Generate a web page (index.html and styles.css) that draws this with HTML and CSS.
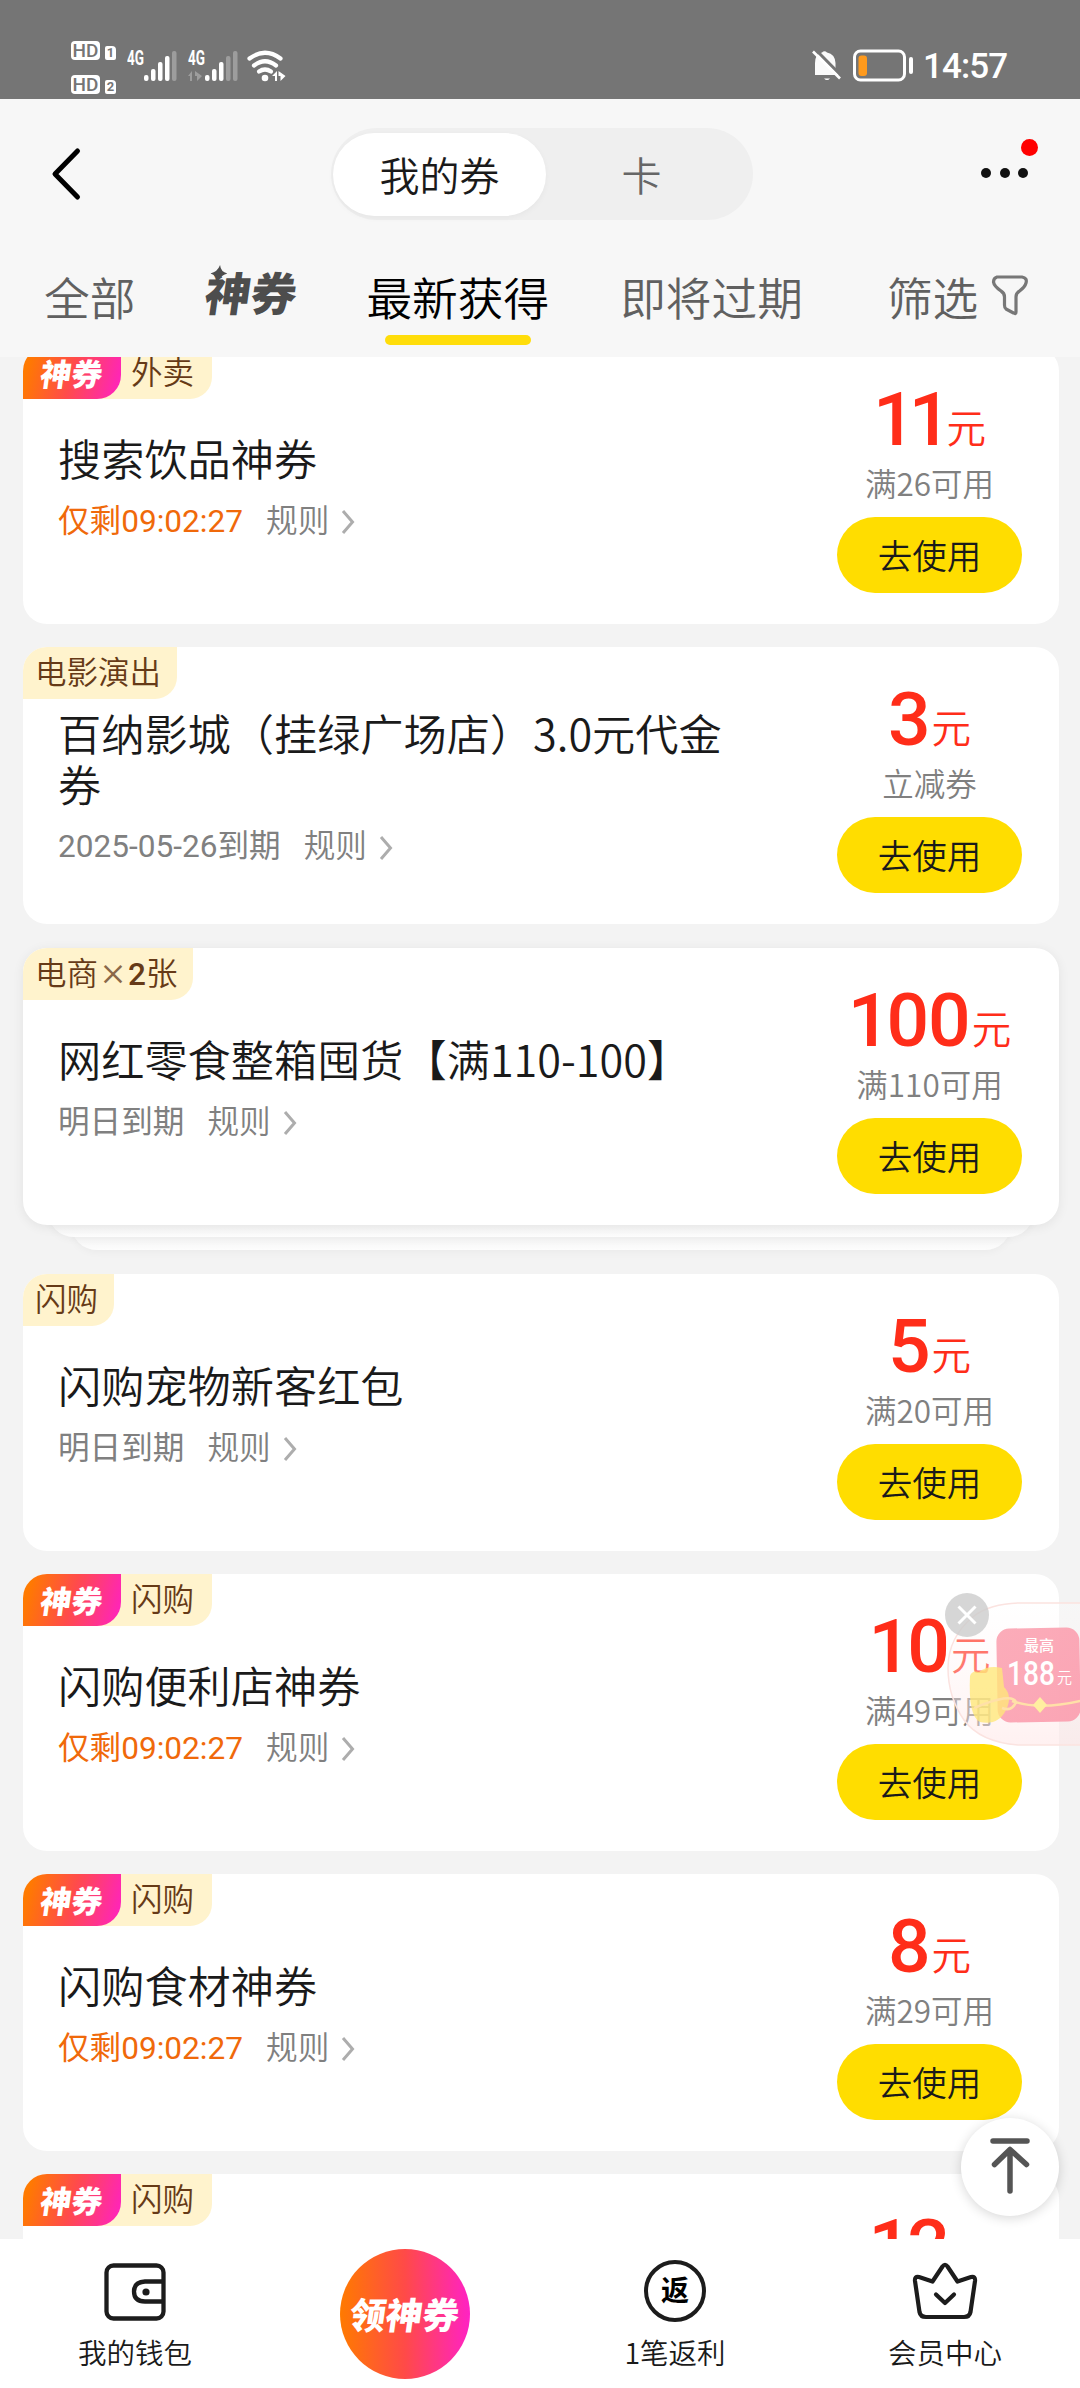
FILE: index.html
```html
<!DOCTYPE html>
<html lang="zh-CN">
<head>
<meta charset="utf-8">
<title>我的券</title>
<link rel="stylesheet" href="styles.css">
</head>
<body>
<svg class="defs" width="0" height="0" aria-hidden="true">
  <symbol id="chevron" viewBox="0 0 14 26"><path d="M2 2 L11.5 13 L2 24" fill="none" stroke="#adadad" stroke-width="3"/></symbol>
  <symbol id="spark" viewBox="0 0 16 16"><path d="M8 0 Q9.5 6.5 16 8 Q9.5 9.5 8 16 Q6.5 9.5 0 8 Q6.5 6.5 8 0Z" fill="currentColor"/></symbol>
</svg>
<div class="screen">
  <div class="status">
    <div class="hd">
      <div class="hd-row"><span class="hd-box">HD</span><span class="sim">1</span></div>
      <div class="hd-row"><span class="hd-box">HD</span><span class="sim">2</span></div>
    </div>
    <svg class="signals" width="160" height="34" viewBox="0 0 160 34">
      <g fill="#fff">
        <rect x="17" y="26" width="4.5" height="6" rx="2"/><rect x="24" y="20" width="4.5" height="12" rx="2"/><rect x="31" y="13" width="4.5" height="19" rx="2"/><rect x="38" y="7" width="4.5" height="25" rx="2"/>
        <rect x="78" y="26" width="4.5" height="6" rx="2"/><rect x="85" y="20" width="4.5" height="12" rx="2"/><rect x="92" y="13" width="4.5" height="19" rx="2"/>
      </g>
      <g fill="#9d9d9d">
        <rect x="45" y="2" width="4.5" height="30" rx="2"/><rect x="99" y="7" width="4.5" height="25" rx="2"/><rect x="106" y="2" width="4.5" height="30" rx="2"/>
        <path d="M61 27l4-5v10h-2v-5zM68 22l7 5-5 5v-5h-2z"/>
      </g>
      <text x="0" y="15.5" class="net" textLength="17" lengthAdjust="spacingAndGlyphs">4G</text>
      <text x="61" y="15.5" class="net" textLength="17" lengthAdjust="spacingAndGlyphs">4G</text>
      <g fill="none" stroke="#fff" stroke-width="4.2" stroke-linecap="round">
        <path d="M122.500 9.500Q138-2 153.500 9.500"/><path d="M127 16.500Q138 8 149 16.500"/><path d="M132 22.500Q138 18.500 144 22.500"/>
      </g>
      <circle cx="138" cy="29" r="3.300" fill="#fff"/>
      <path d="M145 27l5-5v10h-2v-5zM151.500 22l7 5-5 5v-5h-2z" fill="#fff"/>
    </svg>
    <div class="status-right">
      <svg width="30" height="32" viewBox="0 0 30 32"><path d="M5 25V13Q5 4 12 2.500Q14.500 0 17 2.500Q25 4 25.500 13V20L29 25Z" fill="#fafafa" transform="translate(-2 1)"/><path d="M12 29.500h6q-3 3-6 0z" fill="#fff"/><path d="M2.500-.500 30 27.500" stroke="#757575" stroke-width="3"/><path d="M1 2.500 28 29.500" stroke="#fff" stroke-width="2.600"/></svg>
      <svg class="battery" width="61" height="34" viewBox="0 0 61 34"><rect x="1.500" y="2" width="50" height="29" rx="6" fill="none" stroke="#fff" stroke-width="3"/><rect x="5.500" y="6.500" width="8.500" height="20.500" rx="3" fill="#ff9a1c"/><rect x="56" y="8" width="4" height="17" rx="2" fill="#fff"/></svg>
      <span class="time">14:57</span>
    </div>
  </div>

  <header class="header">
    <svg class="back" width="34" height="58" viewBox="0 0 34 58"><path d="M28.500 6 6 29 28.500 52" fill="none" stroke="#000" stroke-width="5" stroke-linecap="round" stroke-linejoin="round"/></svg>
    <div class="segment"><span class="seg seg-on">我的券</span><span class="seg">卡</span></div>
    <div class="more"><i></i><i></i><i></i><b></b></div>
  </header>

  <nav class="tabs">
    <span class="tab all">全部</span>
    <span class="tab brand">神券<svg class="brand-spark" width="17" height="17"><use href="#spark"/></svg></span>
    <span class="tab on">最新获得</span>
    <span class="tab soon">即将过期</span>
    <span class="tab filter">筛选<svg width="38" height="42" viewBox="0 0 38 42"><path d="M6 3H31Q36.500 4 35 9Q34 13 28 17.500Q25 19 25 23V38Q25 40.500 22.500 39L15 35Q13.500 34 13.500 31V23Q13.500 19 10 17Q3 12 2.500 8Q2.500 4 6 3Z" fill="none" stroke="#777" stroke-width="3.200" stroke-linejoin="round"/></svg></span>
  </nav>

  <main class="viewport">
    <div class="list">
      <article class="card">
        <div class="tags"><span class="tag-hot"><em>神券</em></span><span class="tag tag-after">外卖</span></div>
        <div class="info"><h2>搜索饮品神券</h2><p class="meta"><span class="left">仅剩09:02:27</span><span class="rule">规则</span><svg width="14" height="26"><use href="#chevron"/></svg></p></div>
        <div class="deal"><div class="price"><b class="ones">11</b><span>元</span></div><p class="cond">满26可用</p><a class="use">去使用</a></div>
      </article>
      <article class="card">
        <div class="tags"><span class="tag">电影演出</span></div>
        <div class="info"><h2>百纳影城（挂绿广场店）3.0元代金券</h2><p class="meta"><span>2025-05-26到期</span><span class="rule">规则</span><svg width="14" height="26"><use href="#chevron"/></svg></p></div>
        <div class="deal"><div class="price"><b>3</b><span>元</span></div><p class="cond">立减券</p><a class="use">去使用</a></div>
      </article>
      <div class="stack">
        <article class="card raised">
          <div class="tags"><span class="tag">电商<i class="times">×</i><b>2</b>张</span></div>
          <div class="info"><h2>网红零食整箱囤货【满110-100】</h2><p class="meta"><span>明日到期</span><span class="rule">规则</span><svg width="14" height="26"><use href="#chevron"/></svg></p></div>
          <div class="deal"><div class="price"><b><i class="one">1</i>00</b><span>元</span></div><p class="cond">满110可用</p><a class="use">去使用</a></div>
        </article>
        <div class="sheet sheet-1"></div>
        <div class="sheet sheet-2"></div>
      </div>
      <article class="card">
        <div class="tags"><span class="tag">闪购</span></div>
        <div class="info"><h2>闪购宠物新客红包</h2><p class="meta"><span>明日到期</span><span class="rule">规则</span><svg width="14" height="26"><use href="#chevron"/></svg></p></div>
        <div class="deal"><div class="price"><b>5</b><span>元</span></div><p class="cond">满20可用</p><a class="use">去使用</a></div>
      </article>
      <article class="card">
        <div class="tags"><span class="tag-hot"><em>神券</em></span><span class="tag tag-after">闪购</span></div>
        <div class="info"><h2>闪购便利店神券</h2><p class="meta"><span class="left">仅剩09:02:27</span><span class="rule">规则</span><svg width="14" height="26"><use href="#chevron"/></svg></p></div>
        <div class="deal"><div class="price"><b><i class="one">1</i>0</b><span>元</span></div><p class="cond">满49可用</p><a class="use">去使用</a></div>
      </article>
      <article class="card">
        <div class="tags"><span class="tag-hot"><em>神券</em></span><span class="tag tag-after">闪购</span></div>
        <div class="info"><h2>闪购食材神券</h2><p class="meta"><span class="left">仅剩09:02:27</span><span class="rule">规则</span><svg width="14" height="26"><use href="#chevron"/></svg></p></div>
        <div class="deal"><div class="price"><b>8</b><span>元</span></div><p class="cond">满29可用</p><a class="use">去使用</a></div>
      </article>
      <article class="card">
        <div class="tags"><span class="tag-hot"><em>神券</em></span><span class="tag tag-after">闪购</span></div>
        <div class="info"></div>
        <div class="deal"><div class="price"><b><i class="one">1</i>2</b><span>元</span></div></div>
      </article>
    </div>
  </main>

  <footer class="dock">
    <div class="dock-item">
      <svg width="64" height="62" viewBox="0 0 64 62"><g fill="none" stroke="#1c1c1c" stroke-width="4.300"><rect x="3.500" y="5.500" width="57" height="53" rx="7"/><path d="M60 21.500H42Q31 22 31 31.500Q31 41.500 42 41.500H60"/></g><circle cx="43" cy="32" r="3.600" fill="#1c1c1c"/></svg>
      <span>我的钱包</span>
    </div>
    <div class="dock-item"><div class="claim"><em>领神券</em></div></div>
    <div class="dock-item">
      <div class="back-coin">返</div>
      <span>1笔返利</span>
    </div>
    <div class="dock-item">
      <svg width="66" height="62" viewBox="0 0 66 62"><g fill="none" stroke="#1c1c1c" stroke-width="4.200" stroke-linecap="round" stroke-linejoin="round"><path d="M3 21Q2.500 16 7 17L20.500 21.500 30.500 6.500Q33 3 35.500 6.500L45.500 21.500 59 17Q63.500 16 63 21L58.500 52Q57.500 57 52 57H14Q8.500 57 7.500 52Z"/><path d="M24 34.500 33 43 42 34.500"/></g></svg>
      <span>会员中心</span>
    </div>
  </footer>

  <a class="to-top"><svg width="44" height="60" viewBox="0 0 44 60"><path d="M5 5H39M22 14V55M6.500 28.500 22 13.500 38.500 28.500" fill="none" stroke="#555" stroke-width="5.500" stroke-linecap="round" stroke-linejoin="round"/></svg></a>

  <aside class="promo">
    <svg width="140" height="156" viewBox="0 0 140 156">
      <defs>
        <linearGradient id="promoFill" x1="0" y1="0" x2="0" y2="1"><stop offset="0" stop-color="#fff" stop-opacity=".3"/><stop offset="1" stop-color="#ffe3e3" stop-opacity=".5"/></linearGradient>
        <linearGradient id="packet" x1="0" y1="0" x2="1" y2="1"><stop offset="0" stop-color="#fba6b4"/><stop offset="1" stop-color="#fb9fb0"/></linearGradient>
      </defs>
      <path d="M144 11H78Q50 12 34 24Q8 45 8 76Q8 105 24 128Q40 150 78 153H144Z" fill="url(#promoFill)" stroke="#fbe3e0" stroke-width="1.500"/>
      <rect x="57" y="36" width="83" height="94" rx="13" fill="url(#packet)" transform="rotate(-1 98 83)" opacity=".93"/>
      <path d="M30 84Q32 78 39 80Q48 73 62 76L64 95Q73 104 66 118Q58 134 40 130Q28 124 30 84Z" fill="#ffe878" opacity=".78"/>
      <path d="M34 116Q72 100 76 110Q72 120 62 116M72 109Q100 119 144 108" fill="none" stroke="#ffe0a8" stroke-width="2.500"/>
      <path d="M100 105 107 113 100 121 93 113Z" fill="#ffefa0"/>
      <text x="84" y="59" class="p-top">最高</text>
      <text x="67" y="93" class="p-num" textLength="48" lengthAdjust="spacingAndGlyphs">188</text>
      <text x="117" y="91" class="p-unit">元</text>
      <circle cx="27" cy="23" r="22" fill="#ccc" opacity=".8"/>
      <path d="M18.500 14.500 35.500 31.500M35.500 14.500 18.500 31.500" stroke="#fff" stroke-width="3"/>
    </svg>
  </aside>
</div>
</body>
</html>
```
FILE: styles.css
```css
* { box-sizing: border-box; margin: 0; padding: 0; }
body { background: #f3f3f3; font-family: "Noto Sans CJK SC", sans-serif; font-weight: 350; color: #1a1a1a; }
i, em { font-style: normal; }
.defs { display: block; }
.screen { position: relative; width: 1080px; height: 2388px; overflow: hidden; display: flex; flex-direction: column; }

/* status bar */
.status { height: 99px; flex: none; background: #757575; display: flex; align-items: flex-start; color: #fff; }
.hd { margin: 41px 0 0 71px; width: 46px; display: flex; flex-direction: column; gap: 15px; }
.hd-row { display: flex; align-items: flex-end; gap: 5px; height: 19px; }
.hd-box { width: 29px; height: 19px; border-radius: 4px; background: #fff; color: #757575; font: 500 19px/20px Roboto, sans-serif; text-align: center; }
.sim { width: 11px; height: 14px; border-radius: 2px 4px 2px 2px; background: #fff; color: #757575; font: 700 13px/14px Roboto, sans-serif; text-align: center; }
.signals { margin: 49px 0 0 10px; }
.net { font: 700 20px Roboto, sans-serif; fill: #fff; }
.status-right { margin: 49px 73px 0 auto; display: flex; align-items: flex-start; }
.battery { margin-left: 11px; }
.time { margin-left: 9px; width: 84px; font: 500 35px/35px Roboto, sans-serif; letter-spacing: -.9px; white-space: nowrap; }

/* header */
.header { flex: none; height: 151px; background: #f7f7f7; display: flex; align-items: flex-start; }
.back { margin: 46px 0 0 49px; }
.segment { margin: 29px 0 0 248px; width: 422px; height: 92px; padding: 5px 1px 4px 2px; border-radius: 46px; background: #efefef; display: flex; }
.seg { flex: 1; height: 83px; border-radius: 42px; font-size: 40px; line-height: 82px; text-align: center; color: #666; padding-right: 15px; }
.seg-on { flex: none; width: 213px; padding-right: 0; background: #fff; color: #1a1a1a; box-shadow: 0 2px 6px rgba(0,0,0,.04); }
.more { position: relative; margin: 69px 0 0 228px; display: flex; gap: 8.500px; }
.more i { width: 10px; height: 10px; border-radius: 50%; background: #111; }
.more b { position: absolute; left: 40px; top: -29px; width: 17px; height: 17px; border-radius: 50%; background: #f00; }

/* tabs */
.tabs { flex: none; height: 107px; background: #f7f7f7; display: flex; align-items: flex-start; padding-left: 44px; }
.tab { position: relative; font-size: 45.700px; line-height: 60px; height: 95px; padding-top: 16px; color: #606060; white-space: nowrap; }
.brand { margin-left: 70px; width: 92px; font-weight: 900; color: #4d4d4d; padding-top: 11px; transform: skewX(-8deg); }
.brand-spark { position: absolute; left: 2px; top: 15px; }
.on { margin-left: 69px; color: #000; }
.on::after { content: ""; position: absolute; left: 19px; right: 18px; bottom: 0; height: 10px; border-radius: 5px; background: #ffdd0a; }
.soon { margin-left: 71px; }
.filter { margin-left: 84px; display: flex; }
.filter svg { margin: 8px 0 0 13px; }

/* coupon list */
.viewport { flex: 1; min-height: 0; overflow: hidden; }
.list { margin: -10px 21px 0 23px; display: flex; flex-direction: column; gap: 23px; }
.card { position: relative; flex: none; height: 277px; border-radius: 24px; background: #fff; overflow: hidden; display: flex; justify-content: space-between; padding: 0 37px 0 35px; }
.stack { display: flex; flex-direction: column; align-items: center; height: 303px; margin-top: 1px; }
.raised { width: 100%; z-index: 2; box-shadow: 0 2px 12px rgba(0,0,0,.07); }
.sheet { flex: none; margin-top: -28px; height: 40px; border-radius: 0 0 26px 26px; background: linear-gradient(#f5f5f5 72%, #fdfdfd); box-shadow: 0 2px 8px rgba(0,0,0,.04); position: relative; }
.sheet-1 { width: 986px; z-index: 1; }
.sheet-2 { width: 940px; height: 41px; }
.tags { position: absolute; left: 0; top: 0; height: 52px; display: flex; }
.tag { height: 52px; padding: 0 16px 0 12px; border-radius: 0 0 22px 0; background: #fff3cd; color: #663a17; font-size: 31.500px; line-height: 46px; white-space: nowrap; }
.tag b { font: 500 31.500px/46px Roboto, sans-serif; }
.times { display: inline-block; width: 30px; text-align: center; color: #8a6848; font-weight: 500; font-size: 28px; line-height: 40px; }
.tag-after { margin-left: -30px; padding-left: 40px; padding-right: 18px; }
.tag-hot { position: relative; z-index: 1; width: 98px; height: 52px; border-radius: 0 0 24px 0; background: linear-gradient(105deg, #ff7a00 8%, #ff4b4b 50%, #ff22c0 98%); color: #fff; font-size: 31px; font-weight: 900; line-height: 51px; text-align: center; }
.tag-hot em, .claim em { display: inline-block; transform: skewX(-8deg); }
.info { width: 690px; padding-top: 5px; display: flex; flex-direction: column; justify-content: center; }
h2 { font-size: 43.200px; font-weight: 350; line-height: 50.500px; }
.meta { margin-top: 17px; display: flex; align-items: center; font: 350 31.600px/44px Roboto, "Noto Sans CJK SC", sans-serif; color: #808080; }
.meta span:first-child { font-weight: 400; font-family: Roboto, "Noto Sans CJK SC", sans-serif; }
.left { color: #f0690a; }
.rule { margin-left: 23px; }
.meta svg { margin: 1px 0 0 12px; }
.deal { width: 185px; padding-top: 42px; text-align: center; }
.price { height: 60px; display: flex; justify-content: center; align-items: baseline; color: #ff2d19; white-space: nowrap; }
.price b { font: 500 75px/60px Roboto, sans-serif; letter-spacing: -1px; }
.price span { position: relative; top: -2px; font-size: 39.500px; line-height: 39px; margin-left: 2px; }
.price .ones { letter-spacing: -7px; }
.one { letter-spacing: -4px; }
.cond { margin-top: 11px; font-size: 31.500px; line-height: 44px; color: #808080; white-space: nowrap; }
.use { display: block; margin-top: 13px; height: 75.500px; border-radius: 38px; background: #fd0; color: #1a1a1a; font-size: 34.500px; line-height: 75px; }

/* bottom dock */
.dock { flex: none; height: 149px; background: #fff; display: flex; }
.dock-item { width: 270.500px; padding-top: 21px; display: flex; flex-direction: column; align-items: center; }
.dock-item span { margin-top: 10px; font-size: 28.500px; line-height: 40px; }
.claim { margin-top: -11px; width: 130px; height: 130px; border-radius: 50%; background: linear-gradient(90deg, #ff7a00, #ff4a48 50%, #ff22c4); color: #fff; font-size: 36.500px; font-weight: 900; line-height: 129px; text-align: center; white-space: nowrap; }
.back-coin { width: 62px; height: 62px; border: 4.500px solid #1c1c1c; border-radius: 50%; font-size: 28px; font-weight: 700; line-height: 50px; text-align: center; color: #000; }

/* floating layers */
.to-top { position: absolute; left: 961px; top: 2118px; width: 98px; height: 98px; border-radius: 50%; background: #fff; box-shadow: 0 2px 12px rgba(0,0,0,.16); display: flex; justify-content: center; padding-top: 18px; }
.promo { position: absolute; left: 940px; top: 1592px; width: 140px; height: 156px; }
.promo text { fill: #fff; font-family: "Noto Sans CJK SC", sans-serif; }
.promo .p-top { font-size: 15px; font-weight: 500; }
.promo .p-num { font: 500 33px Roboto, sans-serif; }
.promo .p-unit { font-size: 15px; }
```
